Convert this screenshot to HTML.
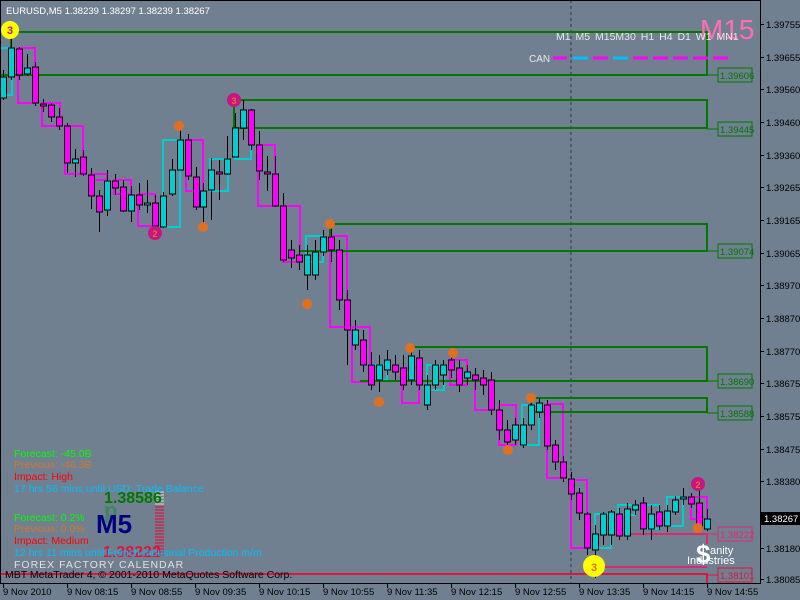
<!DOCTYPE html>
<html><head><meta charset="utf-8"><style>
html,body{margin:0;padding:0;background:#708090;width:800px;height:600px;overflow:hidden}
svg{display:block}
text{font-family:"Liberation Sans",sans-serif}
</style></head><body>
<svg id="s" width="800" height="600" xmlns="http://www.w3.org/2000/svg">
<rect width="800" height="600" fill="#708090"/>
<line x1="571" y1="0" x2="571" y2="583" stroke="#333" stroke-dasharray="3,3" stroke-width="1"/>
<g id="boxes" fill="none" stroke-width="2"></g>
<g stroke="#007800" stroke-width="2" fill="none">
<polyline points="10,32 707,32 707,75 0,75"/>
<polyline points="234,100 707,100 707,128 234,128"/>
<polyline points="330,224 707,224 707,251 300,251"/>
<polyline points="410,347 707,347 707,381 360,381"/>
<polyline points="530,398 707,398 707,412 530,412"/>
<line x1="11" y1="32" x2="11" y2="48"/><line x1="234" y1="100" x2="234" y2="128"/>
<line x1="330" y1="224" x2="330" y2="236"/><line x1="531" y1="398" x2="531" y2="410"/>
<line x1="707" y1="75" x2="718" y2="75" stroke-width="1"/><line x1="707" y1="129" x2="718" y2="129" stroke-width="1"/>
<line x1="707" y1="251" x2="718" y2="251" stroke-width="1"/><line x1="707" y1="381" x2="718" y2="381" stroke-width="1"/>
<line x1="707" y1="413" x2="718" y2="413" stroke-width="1"/>
</g>
<g fill="none" stroke="#007800" stroke-width="1">
<rect x="718" y="68" width="34" height="14"/><rect x="718" y="122" width="34" height="14"/>
<rect x="718" y="244" width="34" height="14"/><rect x="718" y="374" width="34" height="14"/>
<rect x="718" y="406" width="34" height="14"/>
</g>
<g fill="#007800" font-size="9.5">
<text x="720" y="79">1.39606</text><text x="720" y="133">1.39445</text><text x="720" y="255">1.39074</text>
<text x="720" y="385">1.38690</text><text x="720" y="417">1.38588</text>
</g>
<polyline points="600,534 707,534 707,544" stroke="#DC2870" stroke-width="2" fill="none"/>
<polyline points="595,567 707,567" stroke="#DC2870" stroke-width="2" fill="none"/>
<polyline points="0,574 707,574 707,583" stroke="#E0143C" stroke-width="2" fill="none"/>
<line x1="707" y1="534" x2="718" y2="534" stroke="#DC2870"/><line x1="707" y1="575" x2="718" y2="575" stroke="#E0143C"/>
<rect x="718" y="527" width="34" height="14" fill="none" stroke="#DC2870"/>
<rect x="718" y="568" width="34" height="14" fill="none" stroke="#E0143C"/>
<text x="720" y="538" fill="#DC2870" font-size="9.5">1.38222</text>
<text x="720" y="579" fill="#E0143C" font-size="9.5">1.38101</text>
<g id="candles"></g>
<g font-size="11" font-weight="bold" text-anchor="middle">
<circle cx="10" cy="30" r="9" fill="#FFFF00"/><text x="10" y="34" fill="#C71585">3</text>
<circle cx="594" cy="566" r="11" fill="#FFFF00"/><text x="594" y="571" fill="#E07020">3</text>
<circle cx="234" cy="100" r="7" fill="#C71585"/><text x="234" y="104" fill="#E07020" font-size="9">3</text>
<circle cx="155" cy="233" r="7" fill="#C71585"/><text x="155" y="237" fill="#E07020" font-size="9">2</text>
<circle cx="698" cy="484" r="7" fill="#C71585"/><text x="698" y="488" fill="#E07020" font-size="9">2</text>
</g>
<g fill="#E07020">
<circle cx="179" cy="126" r="5"/><circle cx="203" cy="227" r="5"/><circle cx="330" cy="224" r="5"/>
<circle cx="307" cy="304" r="5"/><circle cx="410" cy="348" r="5"/><circle cx="453" cy="353" r="5"/>
<circle cx="379" cy="402" r="5"/><circle cx="531" cy="398" r="5"/><circle cx="508" cy="450" r="5"/>
<circle cx="698" cy="528" r="5"/>
</g>
<text x="6" y="14" fill="#fff" font-size="9.5">EURUSD,M5  1.38239 1.38297 1.38239 1.38267</text>
<text x="700" y="39" fill="#FF6EB4" font-size="28">M15</text>
<text x="556" y="40" fill="#e8e8e8" font-size="10.5" word-spacing="2">M1 M5 M15M30  H1  H4  D1  W1 MN1</text>
<text x="529" y="62" fill="#e8e8e8" font-size="10">CAN</text>
<g stroke-width="3">
<line x1="553" y1="58" x2="567" y2="58" stroke="#FF00FF"/><line x1="573" y1="58" x2="588" y2="58" stroke="#00BFFF"/>
<line x1="593" y1="58" x2="608" y2="58" stroke="#FF00FF"/><line x1="613" y1="58" x2="628" y2="58" stroke="#00BFFF"/>
<line x1="633" y1="58" x2="648" y2="58" stroke="#FF00FF"/><line x1="653" y1="58" x2="668" y2="58" stroke="#FF00FF"/>
<line x1="673" y1="58" x2="688" y2="58" stroke="#FF00FF"/><line x1="693" y1="58" x2="708" y2="58" stroke="#FF00FF"/>
<line x1="713" y1="58" x2="728" y2="58" stroke="#FF00FF"/>
</g>
<g id="ticks"></g>
<text x="104" y="503" fill="#007800" font-size="16" font-weight="bold">1.38586</text>
<text x="104" y="518" fill="#2E8B57" font-size="22" font-weight="bold" opacity=".8">p</text>
<text x="96" y="533" fill="#000080" font-size="26" font-weight="bold">M5</text>
<text x="103" y="557" fill="#E0143C" font-size="16" font-weight="bold">1.38222</text>
<g font-size="10.5">
<text x="14" y="457" fill="#00FF00">Forecast: -45.0B</text>
<text x="14" y="468" fill="#D2782D">Previous: -46.3B</text>
<text x="14" y="480" fill="#FF0000">Impact: High</text>
<text x="14" y="492" fill="#00BFFF">17 hrs 56 mins until USD: Trade Balance</text>
<text x="14" y="521" fill="#00FF00">Forecast: 0.2%</text>
<text x="14" y="532" fill="#D2782D">Previous: 0.0%</text>
<text x="14" y="544" fill="#FF0000">Impact: Medium</text>
<text x="14" y="556" fill="#00BFFF">12 hrs 11 mins until French Industrial Production m/m</text>
<text x="14" y="568" fill="#e0e0e0" letter-spacing="1">FOREX FACTORY CALENDAR</text>
<text x="5" y="578" fill="#000">MBT MetaTrader 4, © 2001-2010 MetaQuotes Software Corp.</text>
</g>
<text x="696" y="563" fill="#fff" font-size="26" font-weight="bold">$</text>
<text x="710" y="554" fill="#fff" font-size="11">anity</text>
<text x="687" y="564" fill="#fff" font-size="11">Industries</text>
<line x1="760.5" y1="0" x2="760.5" y2="584" stroke="#000"/>
<line x1="0" y1="583.5" x2="761" y2="583.5" stroke="#000"/>
<line x1="0.5" y1="0" x2="0.5" y2="584" stroke="#000"/>
<line x1="0" y1="0.5" x2="761" y2="0.5" stroke="#000"/>
<g id="axis" font-size="9.5" fill="#000"></g>
<rect x="761" y="512" width="39" height="13" fill="#000"/>
<text x="764" y="522" fill="#fff" font-size="9.5">1.38267</text>
</svg>
<script>
var NS="http://www.w3.org/2000/svg";
function el(p,t,a){var e=document.createElementNS(NS,t);for(var k in a)e.setAttribute(k,a[k]);document.getElementById(p).appendChild(e);return e;}
var C=[[3,77,98,70,100,'c'],[11,48,77,32,80,'c'],[19,49,75,47,80,'m'],[27,68,74,54,76,'c'],[35,67,103,62,106,'m'],[43,104,106,99,112,'m'],[51,105,117,103,122,'m'],[59,117,126,108,130,'m'],[67,126,163,123,173,'m'],[75,159,163,149,177,'c'],[83,157,174,150,176,'m'],[91,175,196,168,209,'m'],[99,196,212,190,232,'m'],[107,181,210,170,216,'c'],[115,181,188,174,195,'m'],[123,187,211,180,212,'m'],[131,195,211,186,222,'c'],[139,195,205,183,210,'m'],[147,203,205,180,213,'c'],[155,203,226,195,230,'m'],[163,196,227,192,228,'c'],[172,170,194,159,196,'c'],[180,140,170,125,170,'c'],[188,140,176,134,180,'m'],[196,177,207,167,210,'m'],[203,191,207,183,229,'c'],[211,170,190,158,220,'c'],[219,172,174,160,200,'m'],[227,159,174,136,175,'c'],[235,128,157,113,157,'c'],[243,110,128,100,140,'c'],[251,110,145,109,150,'m'],[259,145,171,131,180,'m'],[267,172,174,156,191,'m'],[275,174,206,156,207,'m'],[283,206,260,193,262,'m'],[291,250,258,240,268,'m'],[299,255,262,245,270,'m'],[307,255,275,245,290,'c'],[315,252,275,240,280,'c'],[323,237,252,230,256,'c'],[331,237,250,228,262,'m'],[339,250,300,240,310,'m'],[347,300,330,290,365,'m'],[355,330,345,320,350,'c'],[363,340,365,330,372,'m'],[371,365,385,352,390,'m'],[379,365,380,355,392,'c'],[387,360,370,350,375,'c'],[395,365,372,355,380,'m'],[403,368,385,355,390,'m'],[411,356,380,348,385,'c'],[419,358,385,350,390,'m'],[427,385,405,375,410,'c'],[435,365,385,360,390,'c'],[443,365,375,360,385,'c'],[451,360,370,352,378,'m'],[459,368,385,360,392,'m'],[467,372,378,365,385,'c'],[475,375,380,368,390,'m'],[483,378,385,370,395,'m'],[491,380,410,372,415,'m'],[499,410,430,400,440,'m'],[507,430,442,420,448,'m'],[515,425,440,418,445,'c'],[523,425,445,418,448,'c'],[531,405,425,400,430,'c'],[539,403,412,398,418,'c'],[547,405,446,400,450,'m'],[555,445,462,440,470,'m'],[563,462,478,456,482,'m'],[571,479,494,472,500,'m'],[579,493,513,488,520,'m'],[587,514,548,512,555,'m'],[595,534,550,525,578,'c'],[603,514,535,512,545,'c'],[611,512,535,510,545,'c'],[619,514,536,508,540,'m'],[627,509,536,503,540,'c'],[635,505,510,500,515,'c'],[643,503,529,497,535,'m'],[651,514,529,505,540,'c'],[659,512,526,505,530,'m'],[667,511,526,505,532,'c'],[675,500,512,496,515,'c'],[683,497,499,488,505,'c'],[691,497,504,493,508,'m'],[699,503,528,490,532,'m'],[707,519,529,509,531,'c']];
C.forEach(function(c){el('candles','line',{x1:c[0]+.5,y1:c[3],x2:c[0]+.5,y2:c[4],stroke:'#000'});
el('candles','rect',{x:c[0]-2.5,y:c[1],width:6,height:Math.max(2,c[2]-c[1]),fill:c[5]=='c'?'#00CED1':'#FF00FF',stroke:'#000','stroke-width':1});});
var B=[[0,48,12,95,'c'],[18,48,35,103,'m'],[42,103,60,126,'m'],[65,126,83,174,'m'],[90,174,107,180,'m'],[114,180,131,194,'m'],[138,194,155,226,'m'],[163,140,180,227,'c'],[186,140,203,191,'m'],[210,159,228,191,'c'],[235,128,251,159,'c'],[258,145,275,206,'m'],[283,206,300,262,'m'],[306,236,323,262,'c'],[330,236,347,327,'m'],[352,327,370,382,'m'],[370,365,387,380,'c'],[402,368,419,403,'m'],[427,365,444,390,'c'],[450,360,467,385,'m'],[475,380,491,410,'m'],[499,405,516,445,'m'],[522,405,539,445,'c'],[547,404,563,478,'m'],[571,480,587,548,'m'],[595,514,611,548,'c'],[618,505,635,515,'c'],[643,505,659,529,'c'],[667,497,683,526,'c'],[691,497,707,519,'m']];
B.forEach(function(b){el('boxes','rect',{x:b[0],y:b[1],width:b[2]-b[0],height:b[3]-b[1],stroke:b[4]=='c'?'#00CED1':'#FF00FF'});});
[[1.39755,24],[1.39655,57],[1.39560,89],[1.39460,122],[1.39360,155],[1.39265,187],[1.39165,220],[1.39065,253],[1.38970,285],[1.38870,318],[1.38770,351],[1.38675,383],[1.38575,416],[1.38475,449],[1.38380,481],[1.38180,548],[1.38085,579]].forEach(function(p){
el('axis','line',{x1:760,y1:p[1]+.5,x2:764,y2:p[1]+.5,stroke:'#000'});el('axis','text',{x:766,y:p[1]+4}).textContent=p[0].toFixed(5);});
var T=['9 Nov 2010','9 Nov 08:15','9 Nov 08:55','9 Nov 09:35','9 Nov 10:15','9 Nov 10:55','9 Nov 11:35','9 Nov 12:15','9 Nov 12:55','9 Nov 13:35','9 Nov 14:15','9 Nov 14:55'];
T.forEach(function(t,i){var x=i==0?3:67+(i-1)*64;el('axis','line',{x1:x+.5,y1:583,x2:x+.5,y2:588,stroke:'#000'});el('axis','text',{x:x,y:595}).textContent=t;});
for(var i=0;i<22;i++){var y=492+i*3;el('ticks','line',{x1:155,y1:y,x2:164,y2:y,stroke:i<5?'#ccc':'#E0143C','stroke-width':1.2});}
</script>
</body></html>
